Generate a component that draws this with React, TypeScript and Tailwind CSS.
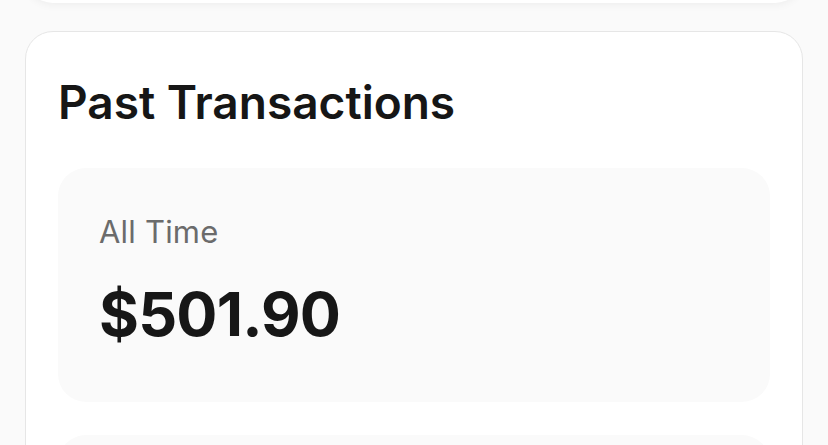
export default function App() {
  return (
    <div className="min-h-screen overflow-hidden bg-[#fafafa] px-[25px] font-['Inter',sans-serif]">
      <div className="-mt-[60px] h-[63px] rounded-[28px] bg-white shadow-[0_2px_8px_rgba(0,0,0,0.05)]" />
      <div className="mt-[28px] rounded-[28px] border border-[#e6e6e6] bg-white px-[32px] pt-[42px]">
        <h2 className="text-[46px] leading-[56px] font-semibold text-[#161616]">
          Past Transactions
        </h2>
        <div className="mt-[38px] flex flex-col gap-[33px]">
          <div className="h-[234px] rounded-[28px] bg-[#fafafa] px-[41px] pt-[44px]">
            <div className="text-[31px] leading-[40px] tracking-[0.2px] text-[#6b6b6b]">All Time</div>
            <div className="mt-[26px] text-[61px] leading-[72px] font-bold tracking-[-0.8px] text-[#171717]">
              $501.90
            </div>
          </div>
          <div className="h-[234px] rounded-[28px] bg-[#fafafa]" />
        </div>
      </div>
    </div>
  );
}
